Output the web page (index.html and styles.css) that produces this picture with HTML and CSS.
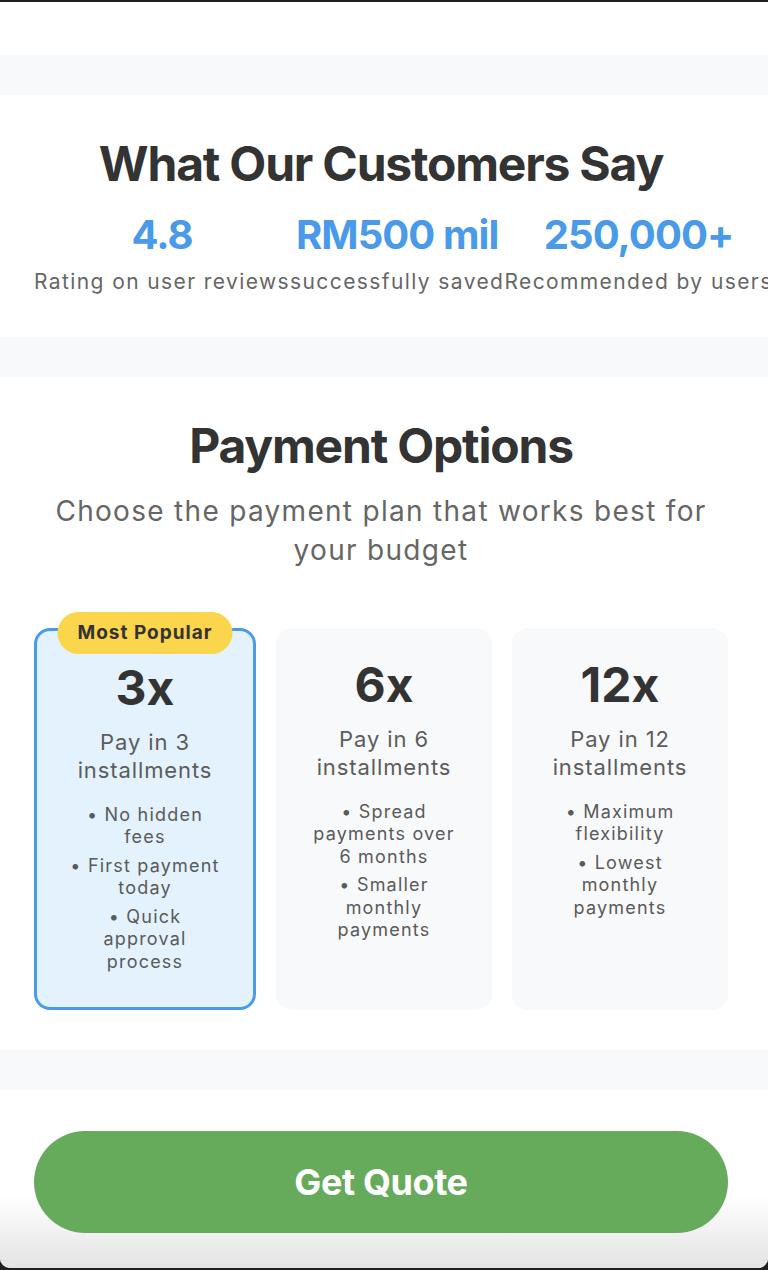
FILE: index.html
```html
<!DOCTYPE html>
<html lang="en">
<head>
<meta charset="utf-8">
<title>Payment Options</title>
<link rel="stylesheet" href="styles.css">
</head>
<body>
<div class="screen">
  <div class="prev-section"></div>

  <section class="section reviews">
    <h2 class="section-title">What Our Customers Say</h2>
    <div class="stats">
      <div class="stat">
        <div class="stat-value">4.8</div>
        <div class="stat-label">Rating on user reviews</div>
      </div>
      <div class="stat">
        <div class="stat-value">RM500 mil</div>
        <div class="stat-label">successfully saved</div>
      </div>
      <div class="stat">
        <div class="stat-value">250,000+</div>
        <div class="stat-label">Recommended by users</div>
      </div>
    </div>
  </section>

  <section class="section payments">
    <h2 class="section-title">Payment Options</h2>
    <p class="section-subtitle">Choose the payment plan that works best for your budget</p>
    <div class="plans">
      <div class="plan plan-popular">
        <span class="badge">Most Popular</span>
        <h3 class="plan-count">3x</h3>
        <p class="plan-desc">Pay in 3 installments</p>
        <ul class="plan-features">
          <li>• No hidden fees</li>
          <li>• First payment today</li>
          <li>• Quick approval process</li>
        </ul>
      </div>
      <div class="plan">
        <h3 class="plan-count">6x</h3>
        <p class="plan-desc">Pay in 6 installments</p>
        <ul class="plan-features">
          <li>• Spread payments over 6 months</li>
          <li>• Smaller monthly payments</li>
        </ul>
      </div>
      <div class="plan">
        <h3 class="plan-count">12x</h3>
        <p class="plan-desc">Pay in 12 installments</p>
        <ul class="plan-features">
          <li>• Maximum flexibility</li>
          <li>• Lowest monthly payments</li>
        </ul>
      </div>
    </div>
  </section>

  <div class="cta-bar">
    <button class="cta-button" type="button">Get Quote</button>
  </div>
</div>
</body>
</html>
```

FILE: styles.css
```css
* {
  box-sizing: content-box;
}

html,
body {
  margin: 0;
  padding: 0;
  background: #1e1e1e;
}

body {
  font-family: Inter, "Noto Sans", "Liberation Sans", sans-serif;
  color: #333;
}

.screen {
  margin-top: 2px;
  height: 1266px;
  background: #f8f9fa;
  border-radius: 0 0 10px 10px;
  overflow: hidden;
  display: flex;
  flex-direction: column;
}

.prev-section {
  height: 53px;
  background: #fff;
  flex-shrink: 0;
}

.section {
  background: #fff;
  margin-top: 40px;
  padding: 40px 40px 40px 34px;
  text-align: center;
  flex-shrink: 0;
}

.section-title {
  margin: 0 0 18px;
  font-size: 48px;
  line-height: 1.2;
  font-weight: 700;
  color: #333;
  letter-spacing: -1.2px;
}

.stats {
  display: flex;
  justify-content: flex-start;
}

.stat {
  flex-shrink: 0;
  text-align: center;
}

.stat-value {
  font-size: 40px;
  line-height: 48px;
  font-weight: 700;
  color: #4a9aea;
  margin-bottom: 8px;
  letter-spacing: -0.9px;
}

.stat-label {
  font-size: 21px;
  line-height: 30px;
  letter-spacing: 1.4px;
  color: #666;
  white-space: nowrap;
}

.section-subtitle {
  margin: 0 0 58px;
  font-size: 28px;
  line-height: 39px;
  letter-spacing: 1.3px;
  color: #666;
}

.plans {
  display: flex;
  gap: 20px;
  align-items: stretch;
}

.plan {
  position: relative;
  flex: 1;
  min-width: 0;
  padding: 28px 32px;
  background: #f8f9fa;
  border-radius: 16px;
  text-align: center;
}

.plan-popular {
  background: #e3f2fd;
  border: 3px solid #4a9aea;
}

.badge {
  position: absolute;
  top: -19px;
  left: 50%;
  transform: translateX(-50%);
  padding: 10px 20px;
  background: #fbd54b;
  border-radius: 22px;
  font-size: 19px;
  line-height: 22px;
  font-weight: 700;
  letter-spacing: 1px;
  color: #333;
  white-space: nowrap;
}

.plan-count {
  margin: 0 0 11px;
  font-size: 48px;
  line-height: 1.2;
  font-weight: 700;
  color: #333;
}

.plan-desc {
  margin: 0 0 19px;
  font-size: 22px;
  line-height: 28.6px;
  letter-spacing: 0.9px;
  color: #5c5c5c;
}

.plan-features {
  list-style: none;
  margin: 0;
  padding: 0;
}

.plan-features li {
  margin-bottom: 6px;
  font-size: 18px;
  line-height: 22.5px;
  letter-spacing: 1.2px;
  color: #5a5a5a;
}

.cta-bar {
  margin-top: 40px;
  flex: 1;
  padding: 41px 40px 40px 34px;
  background: linear-gradient(to bottom, #ffffff 0%, #ffffff 58%, #e1e1e1 100%);
}

.cta-button {
  display: block;
  width: 100%;
  padding: 29px 0;
  border: none;
  border-radius: 51px;
  background: #66aa5c;
  color: #fff;
  font-family: inherit;
  font-size: 36px;
  line-height: 44px;
  font-weight: 700;
  letter-spacing: -0.4px;
  cursor: pointer;
}
```
